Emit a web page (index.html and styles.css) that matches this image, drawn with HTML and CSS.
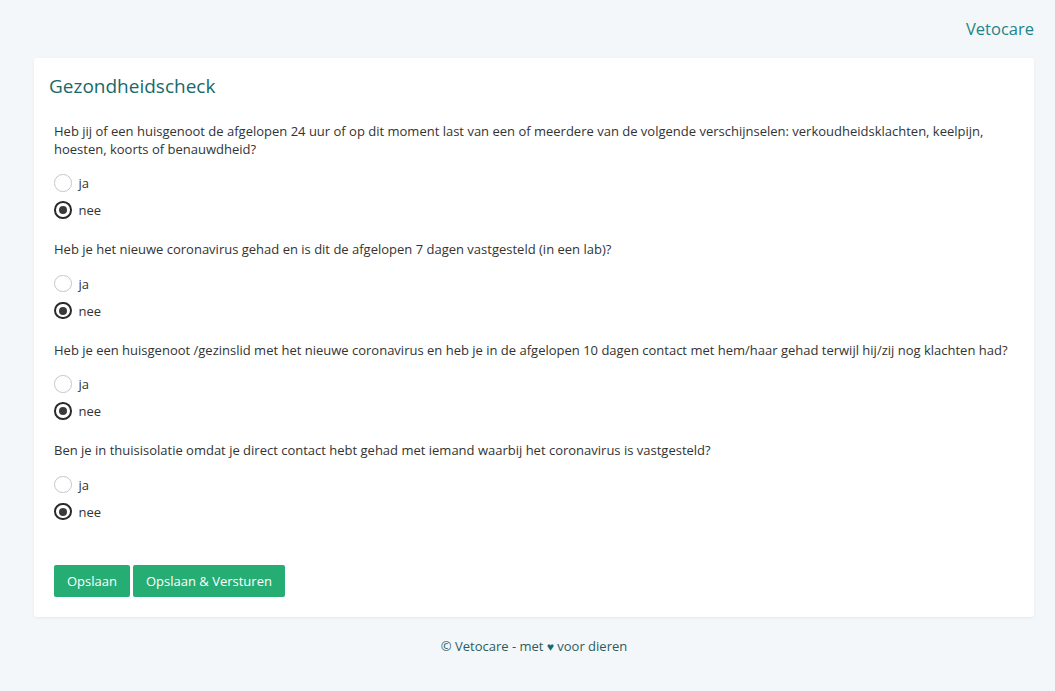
FILE: index.html
```html
<!DOCTYPE html>
<html lang="nl">
<head>
    <meta charset="UTF-8">
    <meta name="viewport" content="width=device-width, initial-scale=1.0">
    <title>Gezondheidscheck - Vetocare</title>
    <link rel="stylesheet" href="styles.css">
</head>
<body>
    <header class="topbar">
        <a class="brand" href="#">Vetocare</a>
    </header>

    <main class="card">
        <h1 class="card-title">Gezondheidscheck</h1>

        <form class="check-form">
            <div class="question">
                <p class="question-text">Heb jij of een huisgenoot de afgelopen 24 uur of op dit moment last van een of meerdere van de volgende verschijnselen: verkoudheidsklachten, keelpijn, hoesten, koorts of benauwdheid?</p>
                <label class="radio"><input type="radio" name="q1" value="ja"><span class="radio-mark"></span>ja</label>
                <label class="radio"><input type="radio" name="q1" value="nee" checked><span class="radio-mark"></span>nee</label>
            </div>

            <div class="question">
                <p class="question-text">Heb je het nieuwe coronavirus gehad en is dit de afgelopen 7 dagen vastgesteld (in een lab)?</p>
                <label class="radio"><input type="radio" name="q2" value="ja"><span class="radio-mark"></span>ja</label>
                <label class="radio"><input type="radio" name="q2" value="nee" checked><span class="radio-mark"></span>nee</label>
            </div>

            <div class="question">
                <p class="question-text">Heb je een huisgenoot /gezinslid met het nieuwe coronavirus en heb je in de afgelopen 10 dagen contact met hem/haar gehad terwijl hij/zij nog klachten had?</p>
                <label class="radio"><input type="radio" name="q3" value="ja"><span class="radio-mark"></span>ja</label>
                <label class="radio"><input type="radio" name="q3" value="nee" checked><span class="radio-mark"></span>nee</label>
            </div>

            <div class="question">
                <p class="question-text">Ben je in thuisisolatie omdat je direct contact hebt gehad met iemand waarbij het coronavirus is vastgesteld?</p>
                <label class="radio"><input type="radio" name="q4" value="ja"><span class="radio-mark"></span>ja</label>
                <label class="radio"><input type="radio" name="q4" value="nee" checked><span class="radio-mark"></span>nee</label>
            </div>

            <div class="actions">
                <button type="button" class="btn">Opslaan</button>
                <button type="button" class="btn">Opslaan &amp; Versturen</button>
            </div>
        </form>
    </main>

    <footer class="footer">
        &copy; Vetocare - met <span class="heart">&#9829;</span> voor dieren
    </footer>
</body>
</html>
```

FILE: styles.css
```css
* {
    margin: 0;
    padding: 0;
    box-sizing: border-box;
}

body {
    font-family: 'Open Sans', 'Noto Sans', sans-serif;
    font-size: 13px;
    color: #333;
    background: #f4f7fa;
    padding: 0 21px 0 34px;
    min-height: 100vh;
}

.topbar {
    display: flex;
    justify-content: flex-end;
    height: 58px;
    padding-top: 17px;
}

.brand {
    font-size: 16.5px;
    line-height: 24px;
    color: #1c8585;
    text-decoration: none;
}

.card {
    background: #fff;
    border-radius: 3px;
    box-shadow: 0 1px 3px rgba(0, 0, 0, 0.06);
    padding: 16px 15px 20px;
}

.card-title {
    font-size: 19px;
    font-weight: normal;
    line-height: 24px;
    color: #17696b;
    margin-bottom: 23.5px;
}

.check-form {
    padding: 0 5px;
}

.question {
    margin-bottom: 16.5px;
}

.question-text {
    line-height: 18px;
    margin-bottom: 12px;
}

.radio {
    display: flex;
    align-items: center;
    height: 27px;
    cursor: pointer;
}

.radio input {
    display: none;
}

.radio-mark {
    width: 17.5px;
    height: 17.5px;
    border: 1px solid #c6c6c6;
    border-radius: 50%;
    margin-right: 7px;
    display: flex;
    align-items: center;
    justify-content: center;
}

.radio input:checked + .radio-mark {
    border: 2px solid #2a2a2a;
}

.radio input:checked + .radio-mark::after {
    content: '';
    width: 8px;
    height: 8px;
    border-radius: 50%;
    background: #3a3a3a;
}

.actions {
    display: flex;
    gap: 3px;
    margin-top: 39.5px;
}

.btn {
    font-family: inherit;
    font-size: 13px;
    color: #fff;
    background: #25ad74;
    border: none;
    border-radius: 2px;
    height: 32px;
    padding: 0 13px;
    cursor: pointer;
}

.footer {
    text-align: center;
    color: #2b5c5e;
    line-height: 18px;
    padding-top: 20px;
}

.heart {
    color: #17696b;
    font-size: 12px;
}
```
